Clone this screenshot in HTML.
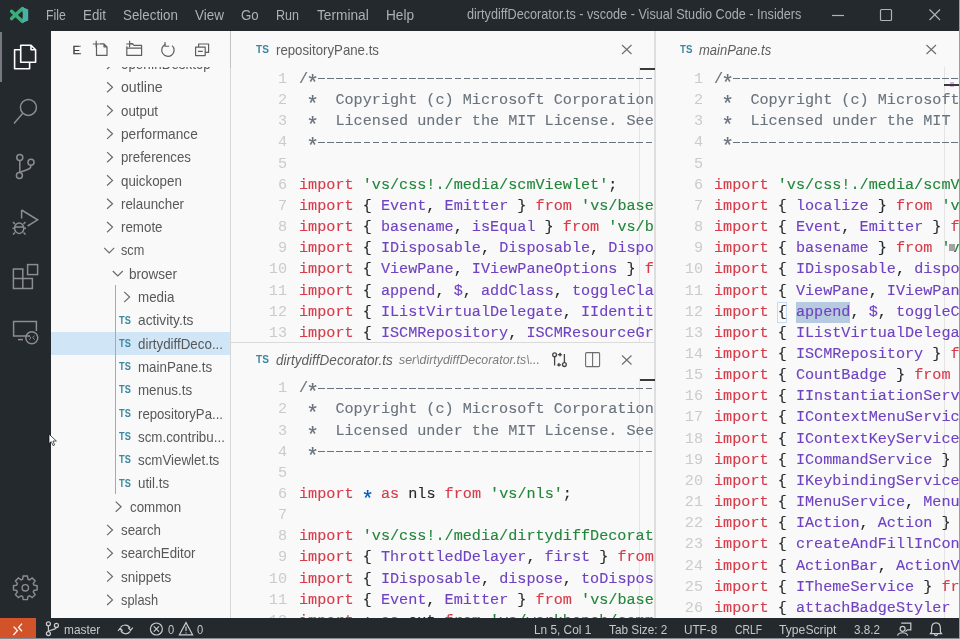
<!DOCTYPE html><html><head><meta charset="utf-8"><style>*{margin:0;padding:0;box-sizing:border-box}
html,body{will-change:transform;width:960px;height:639px;overflow:hidden;background:#f9f9f9;font-family:"Liberation Sans",sans-serif}
.a{position:absolute}
svg{position:absolute;overflow:visible}

.menu{position:absolute;top:7px;color:#c3c5c7;font-size:13.3px;white-space:nowrap;line-height:16px}



.row{position:absolute;font-size:13.5px;color:#5c5c5c;white-space:nowrap;line-height:16px}

.st{position:absolute;top:621px;color:#c9cbcd;font-size:12.2px;white-space:nowrap;line-height:15px}
.ed{overflow:hidden}
.code{position:absolute;font-family:"Liberation Mono",monospace;font-size:15.164px;line-height:21.16px;white-space:pre;color:#24292e}
.ln{position:absolute;font-family:"Liberation Mono",monospace;font-size:15.164px;line-height:21.16px;white-space:pre;color:#c9cbcd;text-align:right}
.k{color:#d73a49}.s{color:#22863a}.i{color:#6f42c1}.c{color:#6a737d}.b{color:#005cc5}
.tab{position:absolute;font-size:13.3px;color:#6a6a6a;white-space:nowrap;line-height:16px}
.ts{position:absolute;font-size:10.5px;font-weight:bold;color:#4a8db5;letter-spacing:-0.2px;line-height:12px}

.ast{display:inline-block;transform:translateY(5.3px) scale(1.4)}
.dash{background-image:repeating-linear-gradient(90deg,#6a737d 0,#6a737d 6.6px,transparent 6.6px,transparent 9.1px);background-size:100% 1.4px;background-repeat:no-repeat;background-position:1.2px 8.5px}
.code{-webkit-text-stroke:0.12px currentColor}
.ast2{display:inline-block;transform:translateY(6.2px) scale(1.4)}
</style></head><body>
<div class="a" style="left:0;top:0;width:960px;height:31px;background:#24292e"></div>
<svg style="left:0;top:0" width="40" height="30" viewBox="0 0 40 30">
<path d="M11.6 11.2 L22.4 21.4 M11.6 18.6 L22.4 8.6" stroke="#3aae76" stroke-width="3.4" stroke-linecap="round"/>
<path d="M22.4 6.9 L28.2 9.6 L28.2 20.6 L22.4 23.1 Z" fill="#48b2a4"/>
<path d="M19.6 15 L22.6 12.2 L22.6 17.8 Z" fill="#24292e"/>
</svg>
<div class="a" style="left:46.00px;top:5.78px;font-size:14.2px;line-height:18px;color:#aeb1b5;white-space:nowrap;transform:scaleX(0.8661);transform-origin:0 0;">File</div>
<div class="a" style="left:83.00px;top:5.78px;font-size:14.2px;line-height:18px;color:#aeb1b5;white-space:nowrap;transform:scaleX(0.9390);transform-origin:0 0;">Edit</div>
<div class="a" style="left:123.00px;top:5.78px;font-size:14.2px;line-height:18px;color:#aeb1b5;white-space:nowrap;transform:scaleX(0.9412);transform-origin:0 0;">Selection</div>
<div class="a" style="left:195.00px;top:5.78px;font-size:14.2px;line-height:18px;color:#aeb1b5;white-space:nowrap;transform:scaleX(0.9499);transform-origin:0 0;">View</div>
<div class="a" style="left:241.00px;top:5.78px;font-size:14.2px;line-height:18px;color:#aeb1b5;white-space:nowrap;transform:scaleX(0.9363);transform-origin:0 0;">Go</div>
<div class="a" style="left:276.00px;top:5.78px;font-size:14.2px;line-height:18px;color:#aeb1b5;white-space:nowrap;transform:scaleX(0.8827);transform-origin:0 0;">Run</div>
<div class="a" style="left:316.60px;top:5.78px;font-size:14.2px;line-height:18px;color:#aeb1b5;white-space:nowrap;transform:scaleX(0.9650);transform-origin:0 0;">Terminal</div>
<div class="a" style="left:385.75px;top:5.78px;font-size:14.2px;line-height:18px;color:#aeb1b5;white-space:nowrap;transform:scaleX(0.9595);transform-origin:0 0;">Help</div>
<div class="a" style="left:467.20px;top:5.28px;font-size:14.2px;line-height:18px;color:#a9acb0;white-space:nowrap;transform:scaleX(0.8921);transform-origin:0 0;">dirtydiffDecorator.ts - vscode - Visual Studio Code - Insiders</div>
<svg style="left:0;top:0" width="960" height="30" viewBox="0 0 960 30">
<path d="M832 15.5 H844" stroke="#b0b3b7" stroke-width="1.2"/>
<rect x="880.5" y="9.5" width="11" height="11" rx="1" fill="none" stroke="#b0b3b7" stroke-width="1.2"/>
<path d="M929.5 9.5 L940 20 M940 9.5 L929.5 20" stroke="#b0b3b7" stroke-width="1.2"/>
</svg>
<div class="a" style="left:0;top:31px;width:51px;height:587px;background:#24292e"></div>
<div class="a" style="left:0;top:31.5px;width:2px;height:50px;background:#76797e"></div>
<svg style="left:0;top:0" width="51" height="639" viewBox="0 0 51 639">
<g fill="none" stroke="#ffffff" stroke-width="1.6" stroke-linejoin="round">
<path d="M20.7 49.8 H14.6 V68.8 H29.6 V62.8"/>
<path d="M20.7 45.2 H31 L35.6 49.8 V62.3 H20.7 Z"/>
<path d="M31 45.2 V49.8 H35.6"/>
</g>
<g fill="none" stroke="#8b8d91" stroke-width="1.5">
<circle cx="28.4" cy="107.4" r="8"/>
<path d="M22.8 113.2 L14 123.4"/>
<circle cx="19.8" cy="157.4" r="3"/>
<circle cx="31" cy="162.2" r="3"/>
<circle cx="19.4" cy="175.6" r="3"/>
<path d="M19.8 160.4 V172.6"/>
<path d="M31 165.2 C31 170 26 169.5 19.8 172.4"/>
<path d="M21.6 210 V218.5 M21.6 210 L37.6 219.8 L27.6 226"/>
<ellipse cx="19.2" cy="228.2" rx="4.6" ry="5.2"/>
<path d="M14.6 228.2 H12.5 M23.8 228.2 H26 M15 224 L13 222 M23.5 224 L25.5 222 M15 232.5 L13 234.5 M23.5 232.5 L25.5 234.5 M14.8 227 H23.6"/>
<path d="M13.4 269 H22.8 V278.6 H32.4 V288.6 H13.4 Z M13.4 278.6 H22.8 V288.6"/>
<rect x="27.6" y="264.6" width="10" height="10"/>
<path d="M30 336 H13.6 V321.6 H36.4 V331"/>
<path d="M18 339.6 H23"/>
<circle cx="31.8" cy="337.8" r="6"/>
<path d="M29.2 336 L31 337.8 L29.2 339.6 M34.6 335.6 L32.8 337.6 L34.6 339.6" stroke-width="1"/>
</g>
<g fill="none" stroke="#8b8d91" stroke-width="1.4">
<circle cx="25.3" cy="587.8" r="3.2"/>
<path d="M33.90 585.14 L37.11 585.70 L37.11 589.90 L33.90 590.46 L33.26 592.00 L35.14 594.67 L32.17 597.64 L29.50 595.76 L27.96 596.40 L27.40 599.61 L23.20 599.61 L22.64 596.40 L21.10 595.76 L18.43 597.64 L15.46 594.67 L17.34 592.00 L16.70 590.46 L13.49 589.90 L13.49 585.70 L16.70 585.14 L17.34 583.60 L15.46 580.93 L18.43 577.96 L21.10 579.84 L22.64 579.20 L23.20 575.99 L27.40 575.99 L27.96 579.20 L29.50 579.84 L32.17 577.96 L35.14 580.93 L33.26 583.60 Z"/>
</g>
</svg>
<div class="a" style="left:51px;top:31px;width:179px;height:587px;background:#f9f9f9"></div>
<div class="a" style="left:230px;top:31px;width:1px;height:587px;background:#d6d6d6"></div>
<div class="a" style="left:51px;top:331.8px;width:179px;height:23px;background:#d0e5f5"></div>
<div class="a" style="left:114.5px;top:285px;width:1px;height:209px;background:#a9a9a9"></div>
<div class="a" style="left:121.00px;top:55.03px;font-size:14.2px;line-height:18px;color:#56585a;white-space:nowrap;transform:scaleX(0.9400);transform-origin:0 0;">openInDesktop</div>
<div class="a" style="left:120.80px;top:78.33px;font-size:14.2px;line-height:18px;color:#56585a;white-space:nowrap;transform:scaleX(0.9972);transform-origin:0 0;">outline</div>
<div class="a" style="left:121.00px;top:101.63px;font-size:14.2px;line-height:18px;color:#56585a;white-space:nowrap;transform:scaleX(0.9400);transform-origin:0 0;">output</div>
<div class="a" style="left:121.25px;top:124.93px;font-size:14.2px;line-height:18px;color:#56585a;white-space:nowrap;transform:scaleX(0.9638);transform-origin:0 0;">performance</div>
<div class="a" style="left:121.25px;top:148.23px;font-size:14.2px;line-height:18px;color:#56585a;white-space:nowrap;transform:scaleX(0.9336);transform-origin:0 0;">preferences</div>
<div class="a" style="left:121.00px;top:171.53px;font-size:14.2px;line-height:18px;color:#56585a;white-space:nowrap;transform:scaleX(0.9400);transform-origin:0 0;">quickopen</div>
<div class="a" style="left:121.00px;top:194.83px;font-size:14.2px;line-height:18px;color:#56585a;white-space:nowrap;transform:scaleX(0.9400);transform-origin:0 0;">relauncher</div>
<div class="a" style="left:121.00px;top:218.13px;font-size:14.2px;line-height:18px;color:#56585a;white-space:nowrap;transform:scaleX(0.9400);transform-origin:0 0;">remote</div>
<div class="a" style="left:120.60px;top:241.43px;font-size:14.2px;line-height:18px;color:#56585a;white-space:nowrap;transform:scaleX(0.8942);transform-origin:0 0;">scm</div>
<div class="a" style="left:129.40px;top:264.73px;font-size:14.2px;line-height:18px;color:#56585a;white-space:nowrap;transform:scaleX(0.9528);transform-origin:0 0;">browser</div>
<div class="a" style="left:138.00px;top:288.03px;font-size:14.2px;line-height:18px;color:#56585a;white-space:nowrap;transform:scaleX(0.9415);transform-origin:0 0;">media</div>
<div class="a" style="left:138.00px;top:311.33px;font-size:14.2px;line-height:18px;color:#56585a;white-space:nowrap;transform:scaleX(0.9674);transform-origin:0 0;">activity.ts</div>
<div class="a" style="left:119.20px;top:313.58px;font-size:10.6px;line-height:13px;color:#3a87a2;white-space:nowrap;transform:scaleX(0.8697);transform-origin:0 0;font-weight:bold;">TS</div>
<div class="a" style="left:138.10px;top:334.63px;font-size:14.2px;line-height:18px;color:#56585a;white-space:nowrap;transform:scaleX(0.9400);transform-origin:0 0;">dirtydiffDeco...</div>
<div class="a" style="left:119.20px;top:336.88px;font-size:10.6px;line-height:13px;color:#3a87a2;white-space:nowrap;transform:scaleX(0.8697);transform-origin:0 0;font-weight:bold;">TS</div>
<div class="a" style="left:138.10px;top:357.93px;font-size:14.2px;line-height:18px;color:#56585a;white-space:nowrap;transform:scaleX(0.9400);transform-origin:0 0;">mainPane.ts</div>
<div class="a" style="left:119.20px;top:360.18px;font-size:10.6px;line-height:13px;color:#3a87a2;white-space:nowrap;transform:scaleX(0.8697);transform-origin:0 0;font-weight:bold;">TS</div>
<div class="a" style="left:138.10px;top:381.23px;font-size:14.2px;line-height:18px;color:#56585a;white-space:nowrap;transform:scaleX(0.9400);transform-origin:0 0;">menus.ts</div>
<div class="a" style="left:119.20px;top:383.48px;font-size:10.6px;line-height:13px;color:#3a87a2;white-space:nowrap;transform:scaleX(0.8697);transform-origin:0 0;font-weight:bold;">TS</div>
<div class="a" style="left:138.10px;top:404.53px;font-size:14.2px;line-height:18px;color:#56585a;white-space:nowrap;transform:scaleX(0.9288);transform-origin:0 0;">repositoryPa...</div>
<div class="a" style="left:119.20px;top:406.78px;font-size:10.6px;line-height:13px;color:#3a87a2;white-space:nowrap;transform:scaleX(0.8697);transform-origin:0 0;font-weight:bold;">TS</div>
<div class="a" style="left:138.10px;top:427.83px;font-size:14.2px;line-height:18px;color:#56585a;white-space:nowrap;transform:scaleX(0.9415);transform-origin:0 0;">scm.contribu...</div>
<div class="a" style="left:119.20px;top:430.08px;font-size:10.6px;line-height:13px;color:#3a87a2;white-space:nowrap;transform:scaleX(0.8697);transform-origin:0 0;font-weight:bold;">TS</div>
<div class="a" style="left:138.10px;top:451.13px;font-size:14.2px;line-height:18px;color:#56585a;white-space:nowrap;transform:scaleX(0.9400);transform-origin:0 0;">scmViewlet.ts</div>
<div class="a" style="left:119.20px;top:453.38px;font-size:10.6px;line-height:13px;color:#3a87a2;white-space:nowrap;transform:scaleX(0.8697);transform-origin:0 0;font-weight:bold;">TS</div>
<div class="a" style="left:138.10px;top:474.43px;font-size:14.2px;line-height:18px;color:#56585a;white-space:nowrap;transform:scaleX(0.9400);transform-origin:0 0;">util.ts</div>
<div class="a" style="left:119.20px;top:476.68px;font-size:10.6px;line-height:13px;color:#3a87a2;white-space:nowrap;transform:scaleX(0.8697);transform-origin:0 0;font-weight:bold;">TS</div>
<div class="a" style="left:129.60px;top:497.73px;font-size:14.2px;line-height:18px;color:#56585a;white-space:nowrap;transform:scaleX(0.9400);transform-origin:0 0;">common</div>
<div class="a" style="left:121.00px;top:521.03px;font-size:14.2px;line-height:18px;color:#56585a;white-space:nowrap;transform:scaleX(0.9400);transform-origin:0 0;">search</div>
<div class="a" style="left:121.00px;top:544.33px;font-size:14.2px;line-height:18px;color:#56585a;white-space:nowrap;transform:scaleX(0.9356);transform-origin:0 0;">searchEditor</div>
<div class="a" style="left:121.00px;top:567.63px;font-size:14.2px;line-height:18px;color:#56585a;white-space:nowrap;transform:scaleX(0.9500);transform-origin:0 0;">snippets</div>
<div class="a" style="left:121.00px;top:590.93px;font-size:14.2px;line-height:18px;color:#56585a;white-space:nowrap;transform:scaleX(0.9040);transform-origin:0 0;">splash</div>
<svg style="left:0;top:0" width="231" height="639" viewBox="0 0 231 639"><path d="M107.1 58.9 L112.5 64.0 L107.1 69.0 M107.1 82.2 L112.5 87.2 L107.1 92.3 M107.1 105.5 L112.5 110.5 L107.1 115.6 M107.1 128.8 L112.5 133.8 L107.1 138.9 M107.1 152.1 L112.5 157.2 L107.1 162.2 M107.1 175.3 L112.5 180.4 L107.1 185.5 M107.1 198.7 L112.5 203.8 L107.1 208.8 M107.1 222.0 L112.5 227.1 L107.1 232.2 M104.2 247.8 L109.2 252.8 L114.2 247.8 M112.8 271.0 L117.8 276.0 L122.8 271.0 M124.2 291.9 L129.6 297.0 L124.2 302.1 M115.7 501.6 L121.1 506.7 L115.7 511.8 M107.1 524.9 L112.5 530.0 L107.1 535.1 M107.1 548.1 L112.5 553.2 L107.1 558.4 M107.1 571.4 L112.5 576.5 L107.1 581.6 M107.1 594.8 L112.5 599.9 L107.1 605.0" fill="none" stroke="#6b6b6b" stroke-width="1.2"/></svg>
<div class="a" style="left:51px;top:31px;width:179px;height:36.2px;background:#f9f9f9"></div>
<div class="a" style="left:230px;top:31px;width:1px;height:37px;background:#c2c2c2"></div>
<div class="a" style="left:72.4px;top:43.8px;font-size:11.4px;color:#3c3c3c;line-height:12px;width:9px;-webkit-text-stroke:0.3px #3c3c3c;overflow:hidden;white-space:nowrap">EXPLORER</div>
<svg style="left:0;top:0" width="231" height="70" viewBox="0 0 231 70">
<g fill="none" stroke="#5f5f5f" stroke-width="1.2" stroke-linejoin="round">
<path d="M96.5 44.2 V55.4 H107 V46.8 L104 43.8 H99.8 M104 43.8 V46.8 H107"/>
<path d="M92.8 44 H99.6 M96.2 40.8 V47.2"/>
<path d="M126.8 46.2 V55.4 H141.6 V45.4 H134 L132.4 43.6 H130.2 M126.8 48.2 H141.6"/>
<path d="M126.2 44 H133 M129.6 40.8 V47.2"/>
<path d="M172.2 45.6 A6.2 6.2 0 1 1 165.4 44.4"/>
<path d="M165 42 V46.2 H169.2" stroke-width="1.1"/>
<path d="M195.6 47.2 H205.2 V55.6 H195.6 Z M198.6 47.2 V44 H208.6 V52.4 H205.2 M198 51.4 H202.8"/>
</g>
</svg>
<div class="a" style="left:0;top:618px;width:960px;height:21px;background:#24292e"></div>
<div class="a" style="left:0;top:618px;width:36px;height:21px;background:#d2522a"></div>
<svg style="left:0;top:0" width="960" height="639" viewBox="0 0 960 639">
<g fill="none" stroke="#ffffff" stroke-width="1.3">
<path d="M13.6 626.6 L17.4 630.6 L13.4 635 M22 623.6 L18.6 627.4 L22 631.2"/>
</g>
<g fill="none" stroke="#c9cbcd" stroke-width="1.2">
<circle cx="48.4" cy="623.8" r="2"/><circle cx="48.4" cy="633.6" r="2"/><circle cx="56.4" cy="625.4" r="2"/>
<path d="M48.4 625.8 V631.6 M56.4 627.4 C56.4 630 50 629 48.4 631.6"/>
<path d="M120.6 627.4 A5.4 5.4 0 0 1 130 628.2 M130.2 631.4 A5.4 5.4 0 0 1 120.8 630.6"/>
<path d="M128.2 627.6 L130.6 630.4 L132.8 627.6 M118 631 L120.2 628.2 L122.6 631"/>
<circle cx="156.4" cy="629" r="6"/>
<path d="M153.8 626.4 L159 631.6 M159 626.4 L153.8 631.6"/>
<path d="M186 622.6 L192.6 634.8 H179.4 Z"/>
<path d="M186 626.6 V631 M186 632.4 V633.4"/>
<path d="M901.2 623.2 H910.8 V629.8 H907.4 L905.4 631.6"/><circle cx="902.6" cy="628.8" r="2.5"/><path d="M897.6 635.6 C898.6 631.8 906.6 631.8 907.6 635.6"/>
<path d="M936 622.8 C932.6 622.8 931.6 625.6 931.6 628.4 V632 L930.4 633.6 H941.6 L940.4 632 V628.4 C940.4 625.6 939.4 622.8 936 622.8 Z M934.4 634.4 A1.7 1.7 0 0 0 937.6 634.4"/>
</g>
</svg>
<div class="a" style="left:63.90px;top:621.90px;font-size:13.0px;line-height:16px;color:#c5c7ca;white-space:nowrap;transform:scaleX(0.9140);transform-origin:0 0;">master</div>
<div class="a" style="left:168.30px;top:621.90px;font-size:13.0px;line-height:16px;color:#c5c7ca;white-space:nowrap;transform:scaleX(0.8593);transform-origin:0 0;">0</div>
<div class="a" style="left:196.60px;top:621.90px;font-size:13.0px;line-height:16px;color:#c5c7ca;white-space:nowrap;transform:scaleX(0.8593);transform-origin:0 0;">0</div>
<div class="a" style="left:533.80px;top:621.90px;font-size:13.0px;line-height:16px;color:#c5c7ca;white-space:nowrap;transform:scaleX(0.9100);transform-origin:0 0;">Ln 5, Col 1</div>
<div class="a" style="left:608.50px;top:621.90px;font-size:13.0px;line-height:16px;color:#c5c7ca;white-space:nowrap;transform:scaleX(0.9069);transform-origin:0 0;">Tab Size: 2</div>
<div class="a" style="left:683.80px;top:621.90px;font-size:13.0px;line-height:16px;color:#c5c7ca;white-space:nowrap;transform:scaleX(0.9008);transform-origin:0 0;">UTF-8</div>
<div class="a" style="left:734.70px;top:621.90px;font-size:13.0px;line-height:16px;color:#c5c7ca;white-space:nowrap;transform:scaleX(0.7958);transform-origin:0 0;">CRLF</div>
<div class="a" style="left:779.00px;top:621.90px;font-size:13.0px;line-height:16px;color:#c5c7ca;white-space:nowrap;transform:scaleX(0.9361);transform-origin:0 0;">TypeScript</div>
<div class="a" style="left:854.00px;top:621.90px;font-size:13.0px;line-height:16px;color:#c5c7ca;white-space:nowrap;transform:scaleX(0.8989);transform-origin:0 0;">3.8.2</div>
<div class="a ed" style="left:231px;top:67px;width:423px;height:275px">
<div class="a" style="left:408px;top:0;width:1px;height:275px;background:#e4e4e4"></div>

<div class="ln" style="left:0;width:56px;top:1.90px">1</div>
<div class="code" style="left:68px;top:1.90px"><span class="c">/<span class="ast">*</span><span class="dash">                                                                                             </span></span></div>
<div class="ln" style="left:0;width:56px;top:23.06px">2</div>
<div class="code" style="left:68px;top:23.06px"><span class="c"> <span class="ast">*</span>  Copyright (c) Microsoft Corporation. All rights reserved.</span></div>
<div class="ln" style="left:0;width:56px;top:44.22px">3</div>
<div class="code" style="left:68px;top:44.22px"><span class="c"> <span class="ast">*</span>  Licensed under the MIT License. See License.txt in the project root for license information.</span></div>
<div class="ln" style="left:0;width:56px;top:65.38px">4</div>
<div class="code" style="left:68px;top:65.38px"><span class="c"> <span class="ast">*</span><span class="dash">                                                                                            </span><span class="ast">*</span>/</span></div>
<div class="ln" style="left:0;width:56px;top:86.54px">5</div>
<div class="code" style="left:68px;top:86.54px"></div>
<div class="ln" style="left:0;width:56px;top:107.70px">6</div>
<div class="code" style="left:68px;top:107.70px"><span class="k">import</span> <span class="s">'vs/css!./media/scmViewlet'</span>;</div>
<div class="ln" style="left:0;width:56px;top:128.86px">7</div>
<div class="code" style="left:68px;top:128.86px"><span class="k">import</span> { <span class="i">Event</span>, <span class="i">Emitter</span> } <span class="k">from</span> <span class="s">'vs/base/common/event'</span>;</div>
<div class="ln" style="left:0;width:56px;top:150.02px">8</div>
<div class="code" style="left:68px;top:150.02px"><span class="k">import</span> { <span class="i">basename</span>, <span class="i">isEqual</span> } <span class="k">from</span> <span class="s">'vs/base/common/resources'</span>;</div>
<div class="ln" style="left:0;width:56px;top:171.18px">9</div>
<div class="code" style="left:68px;top:171.18px"><span class="k">import</span> { <span class="i">IDisposable</span>, <span class="i">Disposable</span>, <span class="i">DisposableStore</span>, <span class="i">combinedDisposable</span> } <span class="k">from</span> <span class="s">'vs/base/common/lifecycle'</span>;</div>
<div class="ln" style="left:0;width:56px;top:192.34px">10</div>
<div class="code" style="left:68px;top:192.34px"><span class="k">import</span> { <span class="i">ViewPane</span>, <span class="i">IViewPaneOptions</span> } <span class="k">from</span> <span class="s">'vs/workbench/browser/parts/views/viewPaneContainer'</span>;</div>
<div class="ln" style="left:0;width:56px;top:213.50px">11</div>
<div class="code" style="left:68px;top:213.50px"><span class="k">import</span> { <span class="i">append</span>, <span class="i">$</span>, <span class="i">addClass</span>, <span class="i">toggleClass</span>, <span class="i">trackFocus</span> } <span class="k">from</span> <span class="s">'vs/base/browser/dom'</span>;</div>
<div class="ln" style="left:0;width:56px;top:234.66px">12</div>
<div class="code" style="left:68px;top:234.66px"><span class="k">import</span> { <span class="i">IListVirtualDelegate</span>, <span class="i">IIdentityProvider</span> } <span class="k">from</span> <span class="s">'vs/base/browser/ui/list/list'</span>;</div>
<div class="ln" style="left:0;width:56px;top:255.82px">13</div>
<div class="code" style="left:68px;top:255.82px"><span class="k">import</span> { <span class="i">ISCMRepository</span>, <span class="i">ISCMResourceGroup</span>, <span class="i">ISCMResource</span> } <span class="k">from</span> <span class="s">'vs/workbench/contrib/scm/common/scm'</span>;</div>
</div>
<div class="a ed" style="left:231px;top:378px;width:423px;height:240px">
<div class="a" style="left:408px;top:0;width:1px;height:240px;background:#e4e4e4"></div>

<div class="ln" style="left:0;width:56px;top:0.20px">1</div>
<div class="code" style="left:68px;top:0.20px"><span class="c">/<span class="ast">*</span><span class="dash">                                                                                             </span></span></div>
<div class="ln" style="left:0;width:56px;top:21.36px">2</div>
<div class="code" style="left:68px;top:21.36px"><span class="c"> <span class="ast">*</span>  Copyright (c) Microsoft Corporation. All rights reserved.</span></div>
<div class="ln" style="left:0;width:56px;top:42.52px">3</div>
<div class="code" style="left:68px;top:42.52px"><span class="c"> <span class="ast">*</span>  Licensed under the MIT License. See License.txt in the project root for license information.</span></div>
<div class="ln" style="left:0;width:56px;top:63.68px">4</div>
<div class="code" style="left:68px;top:63.68px"><span class="c"> <span class="ast">*</span><span class="dash">                                                                                            </span><span class="ast">*</span>/</span></div>
<div class="ln" style="left:0;width:56px;top:84.84px">5</div>
<div class="code" style="left:68px;top:84.84px"></div>
<div class="ln" style="left:0;width:56px;top:106.00px">6</div>
<div class="code" style="left:68px;top:106.00px"><span class="k">import</span> <span class="b ast2">*</span> <span class="k">as</span> nls <span class="k">from</span> <span class="s">'vs/nls'</span>;</div>
<div class="ln" style="left:0;width:56px;top:127.16px">7</div>
<div class="code" style="left:68px;top:127.16px"></div>
<div class="ln" style="left:0;width:56px;top:148.32px">8</div>
<div class="code" style="left:68px;top:148.32px"><span class="k">import</span> <span class="s">'vs/css!./media/dirtydiffDecorator'</span>;</div>
<div class="ln" style="left:0;width:56px;top:169.48px">9</div>
<div class="code" style="left:68px;top:169.48px"><span class="k">import</span> { <span class="i">ThrottledDelayer</span>, <span class="i">first</span> } <span class="k">from</span> <span class="s">'vs/base/common/async'</span>;</div>
<div class="ln" style="left:0;width:56px;top:190.64px">10</div>
<div class="code" style="left:68px;top:190.64px"><span class="k">import</span> { <span class="i">IDisposable</span>, <span class="i">dispose</span>, <span class="i">toDisposable</span>, <span class="i">Disposable</span> } <span class="k">from</span> <span class="s">'vs/base/common/lifecycle'</span>;</div>
<div class="ln" style="left:0;width:56px;top:211.80px">11</div>
<div class="code" style="left:68px;top:211.80px"><span class="k">import</span> { <span class="i">Event</span>, <span class="i">Emitter</span> } <span class="k">from</span> <span class="s">'vs/base/common/event'</span>;</div>
<div class="ln" style="left:0;width:56px;top:232.96px">12</div>
<div class="code" style="left:68px;top:232.96px"><span class="k">import</span> <span class="b ast2">*</span> <span class="k">as</span> ext <span class="k">from</span> <span class="s">'vs/workbench/common/contributions'</span>;</div>
</div>
<div class="a ed" style="left:656px;top:67px;width:304px;height:551px">
<div class="a" style="left:288px;top:0;width:1px;height:551px;background:#e4e4e4"></div>
<div class="a" style="left:139.90px;top:234.66px;width:54.60px;height:21.16px;background:#b6cbdf"></div><div class="a" style="left:121.20px;top:234.66px;width:10.10px;height:21.16px;border:1px solid #c5dcee"></div>
<div class="ln" style="left:0;width:47px;top:1.90px">1</div>
<div class="code" style="left:58px;top:1.90px"><span class="c">/<span class="ast">*</span><span class="dash">                                                                                             </span></span></div>
<div class="ln" style="left:0;width:47px;top:23.06px">2</div>
<div class="code" style="left:58px;top:23.06px"><span class="c"> <span class="ast">*</span>  Copyright (c) Microsoft Corporation. All rights reserved.</span></div>
<div class="ln" style="left:0;width:47px;top:44.22px">3</div>
<div class="code" style="left:58px;top:44.22px"><span class="c"> <span class="ast">*</span>  Licensed under the MIT License. See License.txt in the project root for license information.</span></div>
<div class="ln" style="left:0;width:47px;top:65.38px">4</div>
<div class="code" style="left:58px;top:65.38px"><span class="c"> <span class="ast">*</span><span class="dash">                                                                                            </span><span class="ast">*</span>/</span></div>
<div class="ln" style="left:0;width:47px;top:86.54px">5</div>
<div class="code" style="left:58px;top:86.54px"></div>
<div class="ln" style="left:0;width:47px;top:107.70px">6</div>
<div class="code" style="left:58px;top:107.70px"><span class="k">import</span> <span class="s">'vs/css!./media/scmViewlet'</span>;</div>
<div class="ln" style="left:0;width:47px;top:128.86px">7</div>
<div class="code" style="left:58px;top:128.86px"><span class="k">import</span> { <span class="i">localize</span> } <span class="k">from</span> <span class="s">'vs/nls'</span>;</div>
<div class="ln" style="left:0;width:47px;top:150.02px">8</div>
<div class="code" style="left:58px;top:150.02px"><span class="k">import</span> { <span class="i">Event</span>, <span class="i">Emitter</span> } <span class="k">from</span> <span class="s">'vs/base/common/event'</span>;</div>
<div class="ln" style="left:0;width:47px;top:171.18px">9</div>
<div class="code" style="left:58px;top:171.18px"><span class="k">import</span> { <span class="i">basename</span> } <span class="k">from</span> <span class="s">'vs/base/common/resources'</span>;</div>
<div class="ln" style="left:0;width:47px;top:192.34px">10</div>
<div class="code" style="left:58px;top:192.34px"><span class="k">import</span> { <span class="i">IDisposable</span>, <span class="i">dispose</span> } <span class="k">from</span> <span class="s">'vs/base/common/lifecycle'</span>;</div>
<div class="ln" style="left:0;width:47px;top:213.50px">11</div>
<div class="code" style="left:58px;top:213.50px"><span class="k">import</span> { <span class="i">ViewPane</span>, <span class="i">IViewPaneOptions</span> } <span class="k">from</span> <span class="s">'vs/workbench/browser/parts/views/viewPaneContainer'</span>;</div>
<div class="ln" style="left:0;width:47px;top:234.66px">12</div>
<div class="code" style="left:58px;top:234.66px"><span class="k">import</span> { <span class="i">append</span>, <span class="i">$</span>, <span class="i">toggleClass</span> } <span class="k">from</span> <span class="s">'vs/base/browser/dom'</span>;</div>
<div class="ln" style="left:0;width:47px;top:255.82px">13</div>
<div class="code" style="left:58px;top:255.82px"><span class="k">import</span> { <span class="i">IListVirtualDelegate</span> } <span class="k">from</span> <span class="s">'vs/base/browser/ui/list/list'</span>;</div>
<div class="ln" style="left:0;width:47px;top:276.98px">14</div>
<div class="code" style="left:58px;top:276.98px"><span class="k">import</span> { <span class="i">ISCMRepository</span> } <span class="k">from</span> <span class="s">'vs/workbench/contrib/scm/common/scm'</span>;</div>
<div class="ln" style="left:0;width:47px;top:298.14px">15</div>
<div class="code" style="left:58px;top:298.14px"><span class="k">import</span> { <span class="i">CountBadge</span> } <span class="k">from</span> <span class="s">'vs/base/browser/ui/countBadge/countBadge'</span>;</div>
<div class="ln" style="left:0;width:47px;top:319.30px">16</div>
<div class="code" style="left:58px;top:319.30px"><span class="k">import</span> { <span class="i">IInstantiationService</span> } <span class="k">from</span> <span class="s">'vs/platform/instantiation/common/instantiation'</span>;</div>
<div class="ln" style="left:0;width:47px;top:340.46px">17</div>
<div class="code" style="left:58px;top:340.46px"><span class="k">import</span> { <span class="i">IContextMenuService</span> } <span class="k">from</span> <span class="s">'vs/platform/contextview/browser/contextView'</span>;</div>
<div class="ln" style="left:0;width:47px;top:361.62px">18</div>
<div class="code" style="left:58px;top:361.62px"><span class="k">import</span> { <span class="i">IContextKeyService</span> } <span class="k">from</span> <span class="s">'vs/platform/contextkey/common/contextkey'</span>;</div>
<div class="ln" style="left:0;width:47px;top:382.78px">19</div>
<div class="code" style="left:58px;top:382.78px"><span class="k">import</span> { <span class="i">ICommandService</span> } <span class="k">from</span> <span class="s">'vs/platform/commands/common/commands'</span>;</div>
<div class="ln" style="left:0;width:47px;top:403.94px">20</div>
<div class="code" style="left:58px;top:403.94px"><span class="k">import</span> { <span class="i">IKeybindingService</span> } <span class="k">from</span> <span class="s">'vs/platform/keybinding/common/keybinding'</span>;</div>
<div class="ln" style="left:0;width:47px;top:425.10px">21</div>
<div class="code" style="left:58px;top:425.10px"><span class="k">import</span> { <span class="i">IMenuService</span>, <span class="i">MenuId</span> } <span class="k">from</span> <span class="s">'vs/platform/actions/common/actions'</span>;</div>
<div class="ln" style="left:0;width:47px;top:446.26px">22</div>
<div class="code" style="left:58px;top:446.26px"><span class="k">import</span> { <span class="i">IAction</span>, <span class="i">Action</span> } <span class="k">from</span> <span class="s">'vs/base/common/actions'</span>;</div>
<div class="ln" style="left:0;width:47px;top:467.42px">23</div>
<div class="code" style="left:58px;top:467.42px"><span class="k">import</span> { <span class="i">createAndFillInContextMenuActions</span> } <span class="k">from</span> <span class="s">'vs/platform/actions/browser/menuEntryActionViewItem'</span>;</div>
<div class="ln" style="left:0;width:47px;top:488.58px">24</div>
<div class="code" style="left:58px;top:488.58px"><span class="k">import</span> { <span class="i">ActionBar</span>, <span class="i">ActionViewItem</span> } <span class="k">from</span> <span class="s">'vs/base/browser/ui/actionbar/actionbar'</span>;</div>
<div class="ln" style="left:0;width:47px;top:509.74px">25</div>
<div class="code" style="left:58px;top:509.74px"><span class="k">import</span> { <span class="i">IThemeService</span> } <span class="k">from</span> <span class="s">'vs/platform/theme/common/themeService'</span>;</div>
<div class="ln" style="left:0;width:47px;top:530.90px">26</div>
<div class="code" style="left:58px;top:530.90px"><span class="k">import</span> { <span class="i">attachBadgeStyler</span> } <span class="k">from</span> <span class="s">'vs/platform/theme/common/styler'</span>;</div>
<div class="ln" style="left:0;width:47px;top:552.06px">27</div>
<div class="code" style="left:58px;top:552.06px"><span class="k">import</span> { <span class="i">Command</span> } <span class="k">from</span> <span class="s">'vs/editor/common/modes'</span>;</div>
</div>
<div class="a" style="left:654px;top:31px;width:2px;height:587px;background:#dedede"></div>
<div class="a" style="left:231px;top:342px;width:424px;height:1px;background:#dadada"></div>
<div class="a" style="left:950px;top:82px;width:4px;height:5px;background:#dcaee0"></div>
<div class="a" style="left:640px;top:68px;width:15px;height:2px;background:#3a3a3a"></div>
<div class="a" style="left:640px;top:378.5px;width:15px;height:2px;background:#3a3a3a"></div>
<div class="a" style="left:944px;top:84px;width:16px;height:2px;background:#3a3a3a"></div>
<div class="a" style="left:256.10px;top:42.63px;font-size:10.6px;line-height:13px;color:#3a87a2;white-space:nowrap;transform:scaleX(0.9508);transform-origin:0 0;font-weight:bold;">TS</div>
<div class="a" style="left:276.00px;top:40.78px;font-size:14.2px;line-height:18px;color:#5e5e5e;white-space:nowrap;transform:scaleX(0.9323);transform-origin:0 0;">repositoryPane.ts</div>
<div class="a" style="left:679.80px;top:42.63px;font-size:10.6px;line-height:13px;color:#3a87a2;white-space:nowrap;transform:scaleX(0.9139);transform-origin:0 0;font-weight:bold;">TS</div>
<div class="a" style="left:699.00px;top:40.78px;font-size:14.2px;line-height:18px;color:#5e5e5e;white-space:nowrap;transform:scaleX(0.9157);transform-origin:0 0;font-style:italic;">mainPane.ts</div>
<div class="a" style="left:256.10px;top:353.13px;font-size:10.6px;line-height:13px;color:#3a87a2;white-space:nowrap;transform:scaleX(0.9508);transform-origin:0 0;font-weight:bold;">TS</div>
<div class="a" style="left:275.60px;top:351.28px;font-size:14.2px;line-height:18px;color:#5e5e5e;white-space:nowrap;transform:scaleX(0.9534);transform-origin:0 0;font-style:italic;">dirtydiffDecorator.ts</div>
<div class="a" style="left:399.00px;top:352.43px;font-size:12.6px;line-height:16px;color:#7c7c7c;white-space:nowrap;transform:scaleX(0.9808);transform-origin:0 0;font-style:italic;">ser\dirtydiffDecorator.ts\...</div>
<svg style="left:0;top:0" width="960" height="639" viewBox="0 0 960 639">
<g fill="none" stroke="#6c6c6c" stroke-width="1.1">
<path d="M622 45 L631.5 54 M631.5 45 L622 54"/>
<path d="M926.5 45 L936 54 M936 45 L926.5 54"/>
<path d="M622 355.5 L631.5 364.5 M631.5 355.5 L622 364.5"/>
<rect x="585.6" y="352.6" width="14" height="14" rx="1"/>
<path d="M592.6 352.6 V366.6"/>
</g>
<g fill="none" stroke="#444" stroke-width="1.3">
<circle cx="554.6" cy="354.8" r="1.9"/><circle cx="564.4" cy="364.6" r="1.9"/>
<path d="M554.6 356.7 V365.5 M564.4 362.7 V354 M557.8 354.6 H561 L559.6 353 M561 354.6 L559.6 356.2 M561.2 364.8 H558 L559.4 363.2 M558 364.8 L559.4 366.4"/>
</g>
</svg>
<div class="a" style="left:949px;top:243.6px;width:6px;height:7px;background:#a3a3a5"></div>
<svg style="left:0;top:0" width="70" height="460" viewBox="0 0 70 460"><path d="M49 434.2 V443.6 L51.3 441.6 L53 445.6 L54.6 444.9 L53 441 L56.4 441 Z" fill="#fff" stroke="#111" stroke-width="0.7"/></svg>
<div class="a" style="left:0;top:638px;width:960px;height:1px;background:#858b92"></div>
<div class="a" style="left:959px;top:0;width:1px;height:639px;background:#9a9da3"></div>
</body></html>
